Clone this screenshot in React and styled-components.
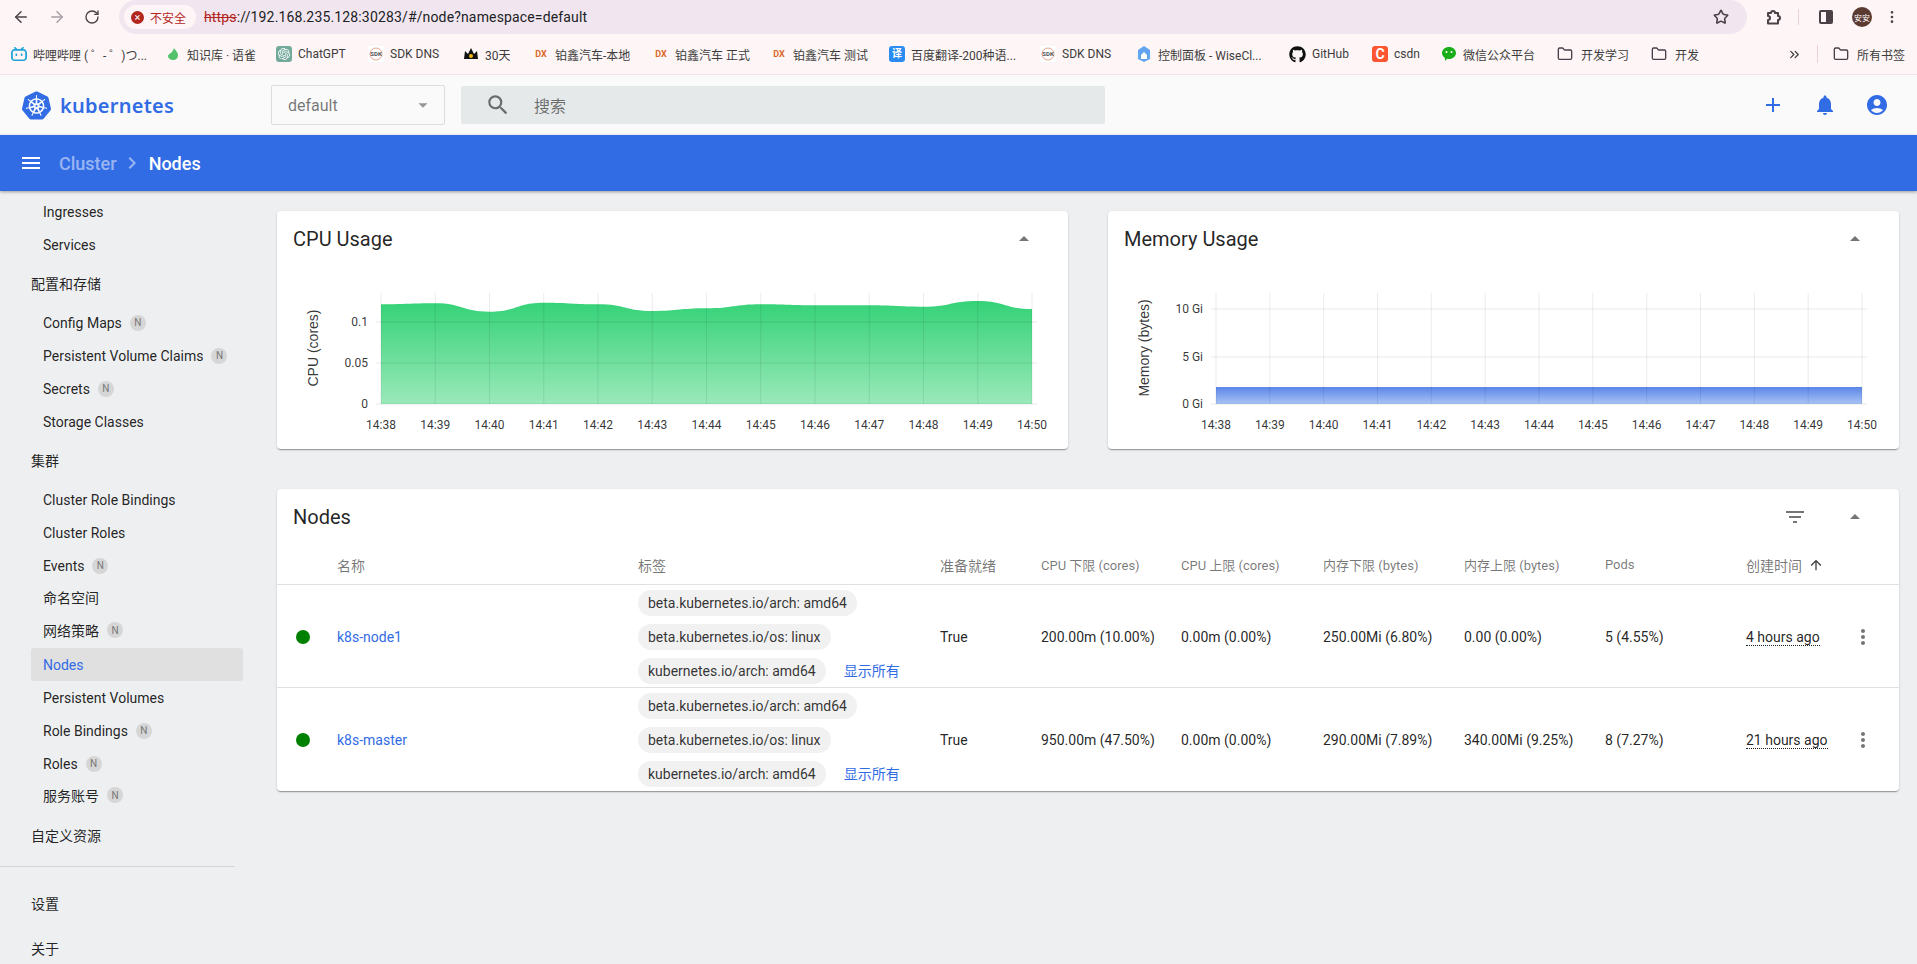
import React from "react";
import styled, { createGlobalStyle } from "styled-components";
import { ArrowLeft, ArrowRight, RotateCw, Star, Folder, ChevronsRight, MoreVertical } from "lucide-react";
import { SiBilibili, SiOpenai, SiKubernetes } from "react-icons/si";
import { FaGithub } from "react-icons/fa";
import {
  MdAdd,
  MdNotifications,
  MdAccountCircle,
  MdSearch,
  MdMenu,
  MdChevronRight,
  MdArrowDropUp,
  MdArrowDropDown,
  MdFilterList,
  MdMoreVert,
  MdArrowUpward,
} from "react-icons/md";

const TICKS = ["14:38", "14:39", "14:40", "14:41", "14:42", "14:43", "14:44", "14:45", "14:46", "14:47", "14:48", "14:49", "14:50"];

const GlobalStyle = createGlobalStyle`
  html, body {
    margin: 0;
    padding: 0;
    overflow: hidden;
    background: #eeeff1;
    font-family: Roboto, "Noto Sans CJK SC", sans-serif;
    font-size: 14px;
    color: rgba(0, 0, 0, 0.87);
  }
  * { box-sizing: border-box; }
`;

const Page = styled.div`
  width: 1917px;
  height: 964px;
  display: flex;
  flex-direction: column;
  overflow: hidden;
`;

/* browser chrome */
const Toolbar = styled.div`
  height: 34px;
  flex: none;
  display: flex;
  align-items: center;
  background: #fef6f6;
  color: #4b4147;
`;
const NavButtons = styled.div`
  width: 119px;
  flex: none;
  display: flex;
  align-items: center;
  gap: 18px;
  padding-left: 12px;
`;
const AddressBar = styled.div`
  width: 1628px;
  height: 34px;
  flex: none;
  display: flex;
  align-items: center;
  padding: 0 18px 0 5px;
  background: #f1e6ef;
  border-radius: 17px;
`;
const SecurityChip = styled.div`
  width: 72px;
  height: 24px;
  flex: none;
  display: flex;
  align-items: center;
  gap: 6px;
  padding-left: 7px;
  background: #fef6f6;
  border-radius: 12px;
  color: #b3261e;
  font-size: 12px;
`;
const WarnDot = styled.span`
  width: 13px;
  height: 13px;
  flex: none;
  border-radius: 50%;
  background: #b3261e;
  display: flex;
  align-items: center;
  justify-content: center;
  color: #fff;
  font-size: 11px;
  line-height: 1;
`;
const Url = styled.div`
  flex: 1;
  margin-left: 8px;
  font-size: 14px;
  letter-spacing: 0.15px;
  color: #202124;
  s { color: #b3261e; }
`;
const ToolbarRight = styled.div`
  flex: 1;
  display: flex;
  align-items: center;
  padding-left: 17px;
`;
const ToolDivider = styled.span`
  width: 1px;
  height: 16px;
  background: #f0cfdd;
  margin: 0 19px 0 17px;
`;
const Avatar = styled.span`
  width: 20px;
  height: 20px;
  margin: 0 12px 0 18px;
  flex: none;
  border-radius: 50%;
  background: #5b3a32;
  color: #fff;
  font-size: 8px;
  display: flex;
  align-items: center;
  justify-content: center;
`;

const Bookmarks = styled.div`
  height: 41px;
  flex: none;
  display: flex;
  align-items: center;
  padding-left: 11px;
  background: #fef6f6;
  border-bottom: 1px solid #f4e2e6;
`;
const Bookmark = styled.div`
  width: ${(p) => p.$w}px;
  flex: none;
  display: flex;
  align-items: center;
  gap: ${(p) => p.$gap || 6}px;
  font-size: 12px;
  color: #3c3c3c;
  white-space: nowrap;
  overflow: hidden;
  svg { flex: none; }
`;
const BookmarkIcon = styled.span`
  width: 16px;
  height: 16px;
  flex: none;
  display: flex;
  align-items: center;
  justify-content: center;
  border-radius: 3px;
  background: ${(p) => p.$bg || "transparent"};
  color: ${(p) => p.$color || "#fff"};
  font-size: ${(p) => p.$size || 10}px;
  font-weight: 700;
  line-height: 1;
`;
const BookmarkEnd = styled.div`
  flex: 1;
  display: flex;
  align-items: center;
  justify-content: flex-end;
  gap: 8px;
  padding-right: 12px;
  font-size: 12px;
  color: #3c3c3c;
`;
const BookmarkDivider = styled.span`
  width: 1px;
  height: 18px;
  background: #f0cfdd;
  margin: 0 7px 0 7px;
`;

/* kubernetes dashboard header */
const Header = styled.header`
  height: 60px;
  flex: none;
  display: flex;
  align-items: center;
  padding: 0 28px 0 22px;
  background: #fafafa;
`;
const Brand = styled.div`
  width: 249px;
  flex: none;
  display: flex;
  align-items: center;
  gap: 9px;
  color: #326ce5;
  font-family: "Noto Sans", sans-serif;
  font-size: 20px;
  font-weight: 600;
  letter-spacing: 0.25px;
`;
const NamespaceSelect = styled.div`
  width: 174px;
  height: 40px;
  flex: none;
  display: flex;
  align-items: center;
  justify-content: space-between;
  padding: 0 10px 0 16px;
  background: #fafafa;
  border: 1px solid #dddddd;
  border-radius: 2px;
  color: rgba(0, 0, 0, 0.54);
  font-size: 16px;
  svg { color: rgba(0, 0, 0, 0.4); }
`;
const SearchBox = styled.div`
  width: 644px;
  height: 38px;
  flex: none;
  margin-left: 16px;
  display: flex;
  align-items: center;
  gap: 23px;
  padding-left: 24px;
  background: #e6e9ea;
  border-radius: 2px;
  color: rgba(0, 0, 0, 0.54);
  font-size: 16px;
`;
const HeaderActions = styled.div`
  flex: 1;
  display: flex;
  justify-content: flex-end;
  gap: 28px;
  color: #326ce5;
`;

const ActionBar = styled.div`
  height: 56px;
  flex: none;
  display: flex;
  align-items: center;
  padding-left: 19px;
  background: #326ce5;
  color: #fff;
  font-size: 18px;
  font-weight: 500;
  box-shadow: 0 1px 3px rgba(0, 0, 0, 0.35);
  position: relative;
`;
const Crumb = styled.span`
  margin-left: 16px;
  color: rgba(255, 255, 255, 0.5);
`;
const CrumbSep = styled.span`
  display: flex;
  margin: 0 5px 0 3px;
  color: rgba(255, 255, 255, 0.5);
`;

const Body = styled.div`
  flex: 1;
  display: flex;
  min-height: 0;
`;

/* side navigation */
const Sidebar = styled.nav`
  width: 261px;
  flex: none;
  padding-top: 4px;
  overflow: hidden;
`;
const NavItem = styled.div`
  height: 33px;
  width: 212px;
  margin-left: 31px;
  padding: 0 0 ${(p) => (p.$cjk ? 3 : 0)}px 12px;
  display: flex;
  align-items: center;
  gap: 8px;
  white-space: nowrap;
  border-radius: 3px;
  color: ${(p) => (p.$active ? "#326ce5" : "rgba(0, 0, 0, 0.87)")};
  background: ${(p) => (p.$active ? "#e0e0e0" : "transparent")};
`;
const NavTitle = styled.div`
  height: 33px;
  margin: 7px 0 5px 31px;
  padding-bottom: 4px;
  display: flex;
  align-items: center;
  white-space: nowrap;
`;
const NavDivider = styled.div`
  width: 235px;
  height: 1px;
  margin: 13px 0 22px;
  background: #d4d4d8;
`;
const NavFooter = styled.div`
  height: 33px;
  margin: 0 0 12px 31px;
  padding-bottom: 6px;
  display: flex;
  align-items: center;
`;
const Badge = styled.span`
  width: 16px;
  height: 16px;
  border-radius: 50%;
  background: #d6d6d6;
  color: #777;
  font-size: 10px;
  display: flex;
  align-items: center;
  justify-content: center;
`;

/* content */
const Main = styled.main`
  flex: 1;
  min-width: 0;
  padding: 20px 18px 0 16px;
  display: flex;
  flex-direction: column;
  gap: 40px;
`;
const ChartRow = styled.div`
  display: flex;
  gap: 40px;
`;
const Card = styled.section`
  flex: ${(p) => (p.$wide ? "none" : "1")};
  min-width: 0;
  background: #fff;
  border-radius: 4px;
  box-shadow: 0 2px 1px -1px rgba(0, 0, 0, 0.2), 0 1px 1px 0 rgba(0, 0, 0, 0.14), 0 1px 3px 0 rgba(0, 0, 0, 0.12);
`;
const CardHeader = styled.div`
  height: 56px;
  display: flex;
  align-items: center;
  gap: 36px;
  padding: 0 32px 0 16px;
  color: rgba(0, 0, 0, 0.54);
`;
const CardTitle = styled.h2`
  flex: 1;
  margin: 0;
  font-size: 20px;
  font-weight: 400;
  color: rgba(0, 0, 0, 0.87);
`;
const ChartSvg = styled.svg`
  display: block;
  width: 791px;
  height: 182px;
  text {
    font-family: Roboto, sans-serif;
    font-size: 12px;
    fill: rgba(0, 0, 0, 0.8);
  }
  .axis-title {
    font-family: "Liberation Sans", sans-serif;
    font-size: 14px;
  }
`;

const GRID_COLUMNS = "60px 301px 302px 101px 140px 142px 141px 141px 141px 105px 1fr";

const TableHead = styled.div`
  height: 40px;
  display: grid;
  grid-template-columns: ${GRID_COLUMNS};
  align-items: center;
  border-bottom: 1px solid #e0e0e0;
  font-size: 13px;
  color: rgba(0, 0, 0, 0.54);
`;
const HeadCell = styled.div`
  display: flex;
  align-items: center;
  gap: 6px;
  white-space: nowrap;
  font-size: ${(p) => (p.$cjk ? 14 : 13)}px;
`;
const TableRow = styled.div`
  height: 103px;
  padding-top: ${(p) => (p.$last ? 0 : 1)}px;
  display: grid;
  grid-template-columns: ${GRID_COLUMNS};
  align-items: center;
  border-bottom: ${(p) => (p.$last ? "none" : "1px solid #e0e0e0")};
  white-space: nowrap;
`;
const StatusDot = styled.span`
  display: block;
  width: 14px;
  height: 14px;
  margin-left: 19px;
  border-radius: 50%;
  background: #008000;
`;
const NodeLink = styled.span`
  color: #326ce5;
`;
const ChipList = styled.div`
  display: flex;
  flex-direction: column;
  align-items: flex-start;
  gap: 8px;
`;
const ChipLine = styled.div`
  display: flex;
  align-items: center;
  gap: 18px;
`;
const Chip = styled.span`
  height: 26px;
  padding: 0 10px;
  display: flex;
  align-items: center;
  border-radius: 13px;
  background: #f1f1f1;
  color: rgba(0, 0, 0, 0.8);
`;
const ShowAll = styled.span`
  color: #326ce5;
  padding-bottom: 2px;
`;
const Age = styled.span`
  border-bottom: 1px dotted rgba(0, 0, 0, 0.87);
  line-height: 15px;
`;
const RowMenu = styled.div`
  display: flex;
  color: rgba(0, 0, 0, 0.54);
`;

function smoothPath(points) {
  let d = `M${points[0][0]} ${points[0][1]}`;
  for (let i = 0; i < points.length - 1; i++) {
    const [x0, y0] = points[i];
    const [x1, y1] = points[i + 1];
    const mid = (x0 + x1) / 2;
    d += ` C${mid} ${y0} ${mid} ${y1} ${x1} ${y1}`;
  }
  return d;
}

// coordinates are relative to the card, y counted from the top of the svg
function UsageChart({ id, left, right, yLabels, values, base, title, titleX, colors }) {
  const step = (right - left) / 12;
  const points = values.map((y, i) => [left + i * step, y]);
  const area = `${smoothPath(points)} L${right} ${base} L${left} ${base} Z`;
  return (
    <ChartSvg viewBox="0 0 791 182">
      <defs>
        <linearGradient id={id} x1="0" y1="0" x2="0" y2="1">
          <stop offset="0" stopColor={colors[0]} />
          <stop offset="1" stopColor={colors[1]} />
        </linearGradient>
      </defs>
      <path d={area} fill={`url(#${id})`} />
      {TICKS.map((t, i) => (
        <g key={t}>
          <line x1={left + i * step} x2={left + i * step} y1="26" y2={base} stroke="rgba(0,0,0,0.08)" />
          <text x={left + i * step} y={base + 25} textAnchor="middle">
            {t}
          </text>
        </g>
      ))}
      {yLabels.map(([label, y]) => (
        <g key={label}>
          <line x1={left - 5} x2={right + 5} y1={y} y2={y} stroke="rgba(0,0,0,0.06)" strokeWidth="1.5" />
          <text x={left - 13} y={y + 4} textAnchor="end">
            {label}
          </text>
        </g>
      ))}
      <text className="axis-title" transform={`translate(${titleX} 81) rotate(-90)`} textAnchor="middle" dy="4">
        {title}
      </text>
    </ChartSvg>
  );
}

function CollapseIcon() {
  return <MdArrowDropUp size={24} />;
}

function SdkIcon() {
  return (
    <svg width="16" height="16" viewBox="0 0 16 16">
      <rect width="16" height="16" rx="2" fill="#fff" />
      <circle cx="8" cy="8" r="6" fill="none" stroke="#e6a48e" />
      <text x="8" y="10" textAnchor="middle" fontSize="6" fontWeight="700" fill="#555">SDK</text>
    </svg>
  );
}

function SidePanelIcon() {
  return (
    <svg width="16" height="16" viewBox="0 0 16 16">
      <rect x="2" y="2" width="12" height="12" rx="1" fill="none" stroke="#4b4147" strokeWidth="2" />
      <rect x="8" y="2" width="6" height="12" fill="#4b4147" />
    </svg>
  );
}

function ExtensionIcon() {
  return (
    <svg width="17" height="17" viewBox="0 0 17 17">
      <path
        d="M4 4h3a2 2 0 0 1 4 0h3v3a2 2 0 0 1 0 4v3.500H4V11a2 2 0 0 0 0-4z"
        fill="none"
        stroke="#4b4147"
        strokeWidth="2"
        strokeLinejoin="round"
      />
    </svg>
  );
}

function WechatIcon() {
  return (
    <svg width="16" height="16" viewBox="0 0 16 16">
      <path d="M8 1c3.900 0 7 2.700 7 6s-3.100 6-7 6c-.7 0-1.300-.1-1.900-.2L4 15v-3C2.200 10.900 1 9.100 1 7c0-3.300 3.100-6 7-6z" fill="#1aad19" />
      <circle cx="5.500" cy="6" r="1" fill="#fff" />
      <circle cx="10.500" cy="6" r="1" fill="#fff" />
    </svg>
  );
}

const BOOKMARKS = [
  { w: 154, text: "哔哩哔哩 ( ゜- ゜)つ...", icon: <SiBilibili size={16} color="#1ea5d8" /> },
  {
    w: 111,
    text: "知识库 · 语雀",
    icon: (
      <svg width="16" height="16" viewBox="0 0 16 16">
        <path d="M9 2c1 2 4 4 4 7 0 3-2 5-5 5S3 12 3 10c1-3 4-2 6-8z" fill="#53c26b" />
      </svg>
    ),
  },
  {
    w: 92,
    text: "ChatGPT",
    icon: (
      <BookmarkIcon $bg="#74aa9c">
        <SiOpenai size={12} />
      </BookmarkIcon>
    ),
  },
  { w: 95, text: "SDK DNS", icon: <SdkIcon /> },
  {
    w: 70,
    text: "30天",
    icon: (
      <svg width="16" height="16" viewBox="0 0 16 16">
        <path d="M1 13 2 5l3 3 3-6 3 6 3-3 1 8z" fill="#111" />
        <circle cx="8" cy="10" r="2" fill="#f2b705" />
      </svg>
    ),
  },
  { w: 120, text: "铂鑫汽车-本地", icon: <BookmarkIcon $color="#d9682b" $size={9}>DX</BookmarkIcon> },
  { w: 118, text: "铂鑫汽车 正式", icon: <BookmarkIcon $color="#d9682b" $size={9}>DX</BookmarkIcon> },
  { w: 118, text: "铂鑫汽车 测试", icon: <BookmarkIcon $color="#d9682b" $size={9}>DX</BookmarkIcon> },
  { w: 151, text: "百度翻译-200种语...", icon: <BookmarkIcon $bg="#2a8cf0">译</BookmarkIcon> },
  { w: 96, text: "SDK DNS", icon: <SdkIcon /> },
  {
    w: 153,
    text: "控制面板 - WiseCl...",
    icon: (
      <svg width="16" height="16" viewBox="0 0 16 16">
        <path d="M8 0 14 4v9l-6 3-6-3V4z" fill="#63a4ee" />
        <path d="M8 6 11 9v4H5V9z" fill="#fff" />
      </svg>
    ),
  },
  { w: 83, text: "GitHub", icon: <FaGithub size={17} color="#111" /> },
  { w: 69, text: "csdn", icon: <BookmarkIcon $bg="#fc5531" $size={14}>C</BookmarkIcon> },
  { w: 116, text: "微信公众平台", icon: <WechatIcon /> },
  { w: 94, text: "开发学习", icon: <Folder size={16} color="#47404a" strokeWidth={2} />, gap: 8 },
  { w: 100, text: "开发", icon: <Folder size={16} color="#47404a" strokeWidth={2} />, gap: 8 },
];

const NAV = [
  { text: "Ingresses" },
  { text: "Services" },
  { title: "配置和存储" },
  { text: "Config Maps", badge: true },
  { text: "Persistent Volume Claims", badge: true },
  { text: "Secrets", badge: true },
  { text: "Storage Classes" },
  { title: "集群" },
  { text: "Cluster Role Bindings" },
  { text: "Cluster Roles" },
  { text: "Events", badge: true },
  { text: "命名空间", cjk: true },
  { text: "网络策略", badge: true, cjk: true },
  { text: "Nodes", active: true },
  { text: "Persistent Volumes" },
  { text: "Role Bindings", badge: true },
  { text: "Roles", badge: true },
  { text: "服务账号", badge: true, cjk: true },
  { title: "自定义资源" },
];

const COLUMNS = [
  { text: "" },
  { text: "名称", cjk: true },
  { text: "标签", cjk: true },
  { text: "准备就绪", cjk: true },
  { text: "CPU 下限 (cores)" },
  { text: "CPU 上限 (cores)" },
  { text: "内存下限 (bytes)" },
  { text: "内存上限 (bytes)" },
  { text: "Pods" },
];

const NODES = [
  {
    name: "k8s-node1",
    cells: ["200.00m (10.00%)", "0.00m (0.00%)", "250.00Mi (6.80%)", "0.00 (0.00%)", "5 (4.55%)"],
    age: "4 hours ago",
  },
  {
    name: "k8s-master",
    cells: ["950.00m (47.50%)", "0.00m (0.00%)", "290.00Mi (7.89%)", "340.00Mi (9.25%)", "8 (7.27%)"],
    age: "21 hours ago",
  },
];

export default function App() {
  return (
    <Page>
      <GlobalStyle />
      <Toolbar>
        <NavButtons>
          <ArrowLeft size={18} />
          <ArrowRight size={18} color="#a89fa6" />
          <RotateCw size={16} />
        </NavButtons>
        <AddressBar>
          <SecurityChip>
            <WarnDot>×</WarnDot>
            不安全
          </SecurityChip>
          <Url>
            <s>https</s>://192.168.235.128:30283/#/node?namespace=default
          </Url>
          <Star size={16} strokeWidth={2.4} />
        </AddressBar>
        <ToolbarRight>
          <ExtensionIcon />
          <ToolDivider />
          <SidePanelIcon />
          <Avatar>安安</Avatar>
          <MoreVertical size={16} />
        </ToolbarRight>
      </Toolbar>
      <Bookmarks>
        {BOOKMARKS.map((b) => (
          <Bookmark key={b.text + b.w} $w={b.w} $gap={b.gap}>
            {b.icon}
            {b.text}
          </Bookmark>
        ))}
        <BookmarkEnd>
          <ChevronsRight size={15} />
          <BookmarkDivider />
          <Folder size={16} color="#47404a" strokeWidth={2} />
          所有书签
        </BookmarkEnd>
      </Bookmarks>

      <Header>
        <Brand>
          <SiKubernetes size={29} />
          kubernetes
        </Brand>
        <NamespaceSelect>
          default
          <MdArrowDropDown size={22} />
        </NamespaceSelect>
        <SearchBox>
          <MdSearch size={26} />
          搜索
        </SearchBox>
        <HeaderActions>
          <MdAdd size={24} />
          <MdNotifications size={24} />
          <MdAccountCircle size={24} />
        </HeaderActions>
      </Header>
      <ActionBar>
        <MdMenu size={24} />
        <Crumb>Cluster</Crumb>
        <CrumbSep>
          <MdChevronRight size={24} />
        </CrumbSep>
        Nodes
      </ActionBar>

      <Body>
        <Sidebar>
          {NAV.map((item) =>
            item.title ? (
              <NavTitle key={item.title}>{item.title}</NavTitle>
            ) : (
              <NavItem key={item.text} $active={item.active} $cjk={item.cjk}>
                {item.text}
                {item.badge && <Badge>N</Badge>}
              </NavItem>
            )
          )}
          <NavDivider />
          <NavFooter>设置</NavFooter>
          <NavFooter>关于</NavFooter>
        </Sidebar>

        <Main>
          <ChartRow>
            <Card>
              <CardHeader>
                <CardTitle>CPU Usage</CardTitle>
                <CollapseIcon />
              </CardHeader>
              <UsageChart
                id="cpu"
                left={104}
                right={755}
                base={137}
                title="CPU (cores)"
                titleX={37}
                colors={["#34d277", "#9ae9b9"]}
                yLabels={[
                  ["0.1", 55],
                  ["0.05", 96],
                  ["0", 137],
                ]}
                values={[37.3, 36.3, 44.7, 35.7, 37.3, 44, 41.3, 37.3, 38.3, 38.3, 39.7, 34, 42]}
              />
            </Card>
            <Card>
              <CardHeader>
                <CardTitle>Memory Usage</CardTitle>
                <CollapseIcon />
              </CardHeader>
              <UsageChart
                id="memory"
                left={108}
                right={754}
                base={137}
                title="Memory (bytes)"
                titleX={37}
                colors={["#5a86e8", "#a9c3f5"]}
                yLabels={[
                  ["10 Gi", 42],
                  ["5 Gi", 90],
                  ["0 Gi", 137],
                ]}
                values={[120, 120, 120, 120, 120, 120, 120, 120, 120, 120, 120, 120, 120]}
              />
            </Card>
          </ChartRow>

          <Card $wide>
            <CardHeader>
              <CardTitle>Nodes</CardTitle>
              <MdFilterList size={24} />
              <CollapseIcon />
            </CardHeader>
            <TableHead>
              {COLUMNS.map((c) => (
                <HeadCell key={c.text} $cjk={c.cjk}>
                  {c.text}
                </HeadCell>
              ))}
              <HeadCell $cjk>
                创建时间
                <MdArrowUpward size={16} color="rgba(0,0,0,0.75)" />
              </HeadCell>
            </TableHead>
            {NODES.map((node, i) => (
              <TableRow key={node.name} $last={i === NODES.length - 1}>
                <StatusDot />
                <NodeLink>{node.name}</NodeLink>
                <ChipList>
                  <Chip>beta.kubernetes.io/arch: amd64</Chip>
                  <Chip>beta.kubernetes.io/os: linux</Chip>
                  <ChipLine>
                    <Chip>kubernetes.io/arch: amd64</Chip>
                    <ShowAll>显示所有</ShowAll>
                  </ChipLine>
                </ChipList>
                <div>True</div>
                {node.cells.map((c, j) => (
                  <div key={j}>{c}</div>
                ))}
                <div>
                  <Age>{node.age}</Age>
                </div>
                <RowMenu>
                  <MdMoreVert size={24} />
                </RowMenu>
              </TableRow>
            ))}
          </Card>
        </Main>
      </Body>
    </Page>
  );
}
